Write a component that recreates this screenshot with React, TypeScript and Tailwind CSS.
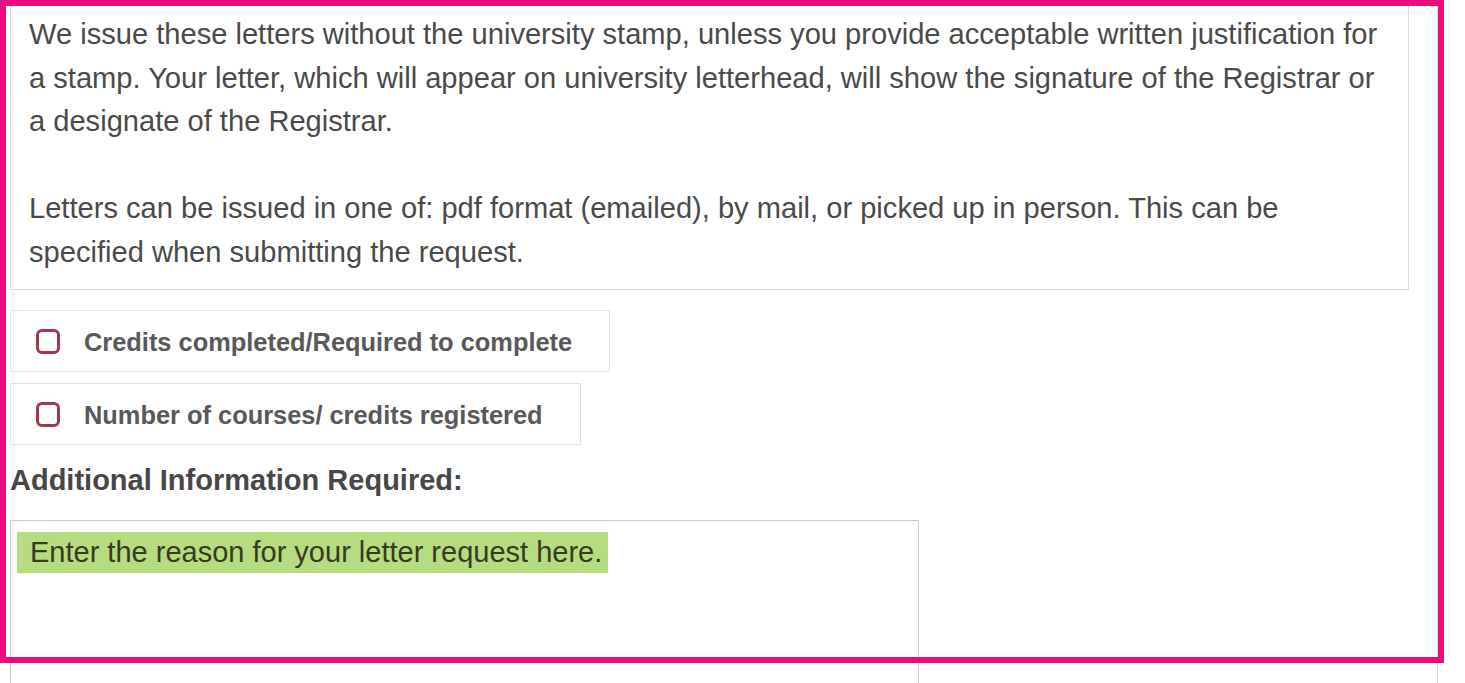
import React from "react";

function CheckRow({ label }: { label: string }) {
  return (
    <label className="flex w-fit items-center border border-[#e0e0e0] h-[62px] pl-[25px] pr-[37px]">
      <span className="block w-[24px] h-[25px] rounded-[6px] border-[3px] border-[#a0374d] bg-white" />
      <span className="ml-[24px] mt-[3px] text-[25.4px] font-bold text-[#595959] leading-none">{label}</span>
    </label>
  );
}

export default function App() {
  return (
    <div
      className="relative w-full h-[683px] bg-white overflow-hidden"
      style={{ fontFamily: '"Liberation Sans", Arial, sans-serif' }}
    >
      <div className="w-[1438px] h-[683px] border-r border-[#dcdcdc]">
        <div className="ml-[10px] w-[1399px] border-x border-b border-[#dcdcdc] pl-[18px] pt-[13px] pb-[15px] text-[29.1px] leading-[43.5px] text-[#4a4a4a]">
          <p className="whitespace-nowrap">
            We issue these letters without the university stamp, unless you provide acceptable written justification for
            <br />
            a stamp. Your letter, which will appear on university letterhead, will show the signature of the Registrar or
            <br />
            a designate of the Registrar.
          </p>
          <p className="mt-[43.5px] whitespace-nowrap">
            Letters can be issued in one of: pdf format (emailed), by mail, or picked up in person. This can be
            <br />
            specified when submitting the request.
          </p>
        </div>

        <div className="ml-[10px] mt-[20px] flex flex-col gap-[11px]">
          <CheckRow label="Credits completed/Required to complete" />
          <CheckRow label="Number of courses/ credits registered" />
        </div>

        <h3 className="ml-[10px] mt-[18px] text-[29px] font-bold text-[#474747] leading-[34px]">
          Additional Information Required:
        </h3>

        <div className="ml-[10px] mt-[23px] w-[909px] h-[200px] border border-[#cccccc] pl-[6px] pt-[11px]">
          <div className="w-fit h-[41px] bg-[#b5dc7f] pl-[13px] pr-[6px] text-[29px] leading-[41px] text-[#3a3a22]">
            Enter the reason for your letter request here.
          </div>
        </div>
      </div>

      <div className="pointer-events-none absolute left-0 top-0 w-[1444px] h-[663px] border-[6px] border-[#ec0c7c]" />
    </div>
  );
}
